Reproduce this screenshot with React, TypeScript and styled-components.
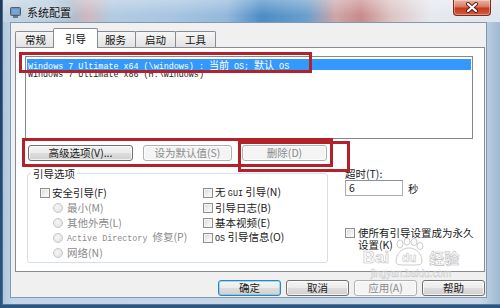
import styled, { createGlobalStyle } from "styled-components";

const CJK = `"Noto Sans CJK SC", "Liberation Sans", sans-serif`;
const MONO = `"Liberation Mono", "Noto Sans CJK SC", monospace`;

const GlobalStyle = createGlobalStyle`
  html, body { margin: 0; padding: 0; background: #1d3b5e; }
  body { font-family: ${CJK}; font-size: 10.5px; color: #1a1a1a; }
  * { box-sizing: border-box; }
`;

const Desktop = styled.div`
  position: relative;
  width: 500px;
  height: 308px;
  overflow: hidden;
  padding-left: 2px;
  background: linear-gradient(180deg, #1d3b5e 0%, #2b5682 100%);
`;

const Window = styled.div`
  width: 498px;
  height: 305px;
  display: flex;
  flex-direction: column;
  border-left: 1px solid #4f6a88;
  border-bottom: 1px solid #5d7896;
  background: linear-gradient(90deg, #aec6dd 0%, #c3d5e6 2%, #c9d7e5 96%, #9fbad4 100%);
`;

const TitleBar = styled.div`
  height: 22px;
  flex: none;
  display: flex;
  align-items: flex-start;
  padding: 0 9px 0 7px;
  background:
    linear-gradient(180deg, rgba(255, 255, 255, 0.3) 0%, rgba(255, 255, 255, 0) 70%),
    linear-gradient(90deg, #c6d5e4 0%, #b8cde0 9%, #a9bccf 13%, #cdb8c0 17%, #b3cbe2 22%,
      #a6c4e1 35%, #93b8dc 45%, #4d8dc6 52%, #6a9fcd 61%, #cfa6a8 67%, #c98b8b 72%,
      #dcc3c3 78%, #e6e9ee 86%, #dfe6ee 100%);
`;

const TitleIcon = styled.svg`
  margin-top: 7px;
  flex: none;
`;

const TitleText = styled.div`
  margin-left: 6px;
  margin-top: 1px;
  line-height: 22px;
  font-size: 11px;
  color: #111;
  text-shadow: 0 0 6px rgba(255, 255, 255, 0.95);
`;

const CloseButton = styled.div`
  margin-left: auto;
  width: 38px;
  height: 16px;
  display: flex;
  align-items: center;
  justify-content: center;
  border: 1px solid #7a2c22;
  border-top: none;
  border-radius: 0 0 4px 4px;
  background: linear-gradient(180deg, #eab2a4 0%, #da8069 42%, #c53a20 55%, #d65a3c 100%);
  box-shadow: inset 0 0 0 1px rgba(255, 255, 255, 0.35);
`;

const FrameBody = styled.div`
  display: flex;
  padding: 0 13px 0 7px;
`;

const Client = styled.div`
  width: 477px;
  height: 276px;
  display: flex;
  flex-direction: column;
  padding: 5px 1px 0 4px;
  border: 1px solid #8098b2;
  background: #f0f0f0;
`;

const TabStrip = styled.div`
  position: relative;
  z-index: 1;
  display: flex;
  align-items: flex-start;
  height: 20px;
  margin-bottom: -1px;
`;

const Tab = styled.div<{ $active?: boolean }>`
  position: relative;
  z-index: ${(p) => (p.$active ? 1 : 0)};
  width: ${(p) => (p.$active ? 45 : 41)}px;
  height: ${(p) => (p.$active ? 20 : 16)}px;
  margin-top: ${(p) => (p.$active ? 0 : 3)}px;
  margin-left: ${(p) => (p.$active ? -3 : -1)}px;
  margin-right: ${(p) => (p.$active ? -2 : 0)}px;
  display: flex;
  align-items: center;
  justify-content: center;
  border: 1px solid #898c95;
  border-bottom: none;
  border-radius: 2px 2px 0 0;
  background: ${(p) => (p.$active ? "#ffffff" : "linear-gradient(180deg, #f6f6f6 0%, #ececec 50%, #e2e2e2 100%)")};
  font-size: 10.5px;
  color: #111;

  &:first-child {
    margin-left: 0;
  }
`;

const Panel = styled.div`
  width: 470px;
  height: 225px;
  display: flex;
  flex-direction: column;
  align-items: flex-start;
  padding: 8px 0 0 9px;
  border: 1px solid #898c95;
  background: #ffffff;
`;

const ListBox = styled.div`
  width: 448px;
  height: 83px;
  padding: 2px 1px;
  border: 1px solid #828790;
  background: #ffffff;
`;

const ListRow = styled.div<{ $selected?: boolean }>`
  height: 11px;
  line-height: 11px;
  padding-left: 1px;
  white-space: nowrap;
  font-family: ${MONO};
  font-size: 8.4px;
  background: ${(p) => (p.$selected ? "#3399ff" : "transparent")};
  color: ${(p) => (p.$selected ? "#ffffff" : "#222222")};
`;

const RowCjk = styled.span`
  font-family: ${CJK};
  font-size: 10px;
`;

const Mono = styled.span`
  font-family: ${MONO};
  font-size: 8.4px;
`;

const ButtonRow = styled.div`
  display: flex;
  gap: 10px;
  margin-top: 6px;
  padding-left: 3px;
`;

const Button = styled.button<{ $w: number; $disabled?: boolean; $default?: boolean }>`
  width: ${(p) => p.$w}px;
  height: 16px;
  padding: 0;
  display: flex;
  align-items: center;
  justify-content: center;
  border: 1px solid ${(p) => (p.$disabled ? "#adb2b5" : p.$default ? "#3c7fb1" : "#707070")};
  border-radius: 3px;
  background: ${(p) =>
    p.$disabled
      ? "#f4f4f4"
      : "linear-gradient(180deg, #f4f4f4 0%, #ececec 48%, #dddddd 52%, #d0d0d0 100%)"};
  box-shadow: inset 0 0 0 1px ${(p) => (p.$default ? "rgba(72, 200, 251, 0.55)" : "rgba(255, 255, 255, 0.7)")};
  color: ${(p) => (p.$disabled ? "#8a8a8a" : "#1a1a1a")};
  font-family: ${CJK};
  font-size: 10.5px;
  line-height: 14px;
  white-space: nowrap;
`;

const LowerArea = styled.div`
  display: flex;
  align-items: flex-start;
  margin-top: 6px;
`;

const Group = styled.fieldset`
  width: 301px;
  margin: 0 0 0 2px;
  padding: 5px 0 2px 0;
  border: 1px solid #d5dfe5;
  border-radius: 3px;
`;

const Legend = styled.legend`
  margin-left: 3px;
  padding: 0 2px;
  font-size: 10.5px;
  line-height: 13px;
  color: #1a1a1a;
`;

const Columns = styled.div`
  display: flex;
  padding-left: 12px;
`;

const OptionColumn = styled.div<{ $w?: number }>`
  width: ${(p) => (p.$w ? `${p.$w}px` : "auto")};
  display: flex;
  flex-direction: column;
`;

const OptionRow = styled.div<{ $indent?: number; $disabled?: boolean }>`
  height: 15px;
  display: flex;
  align-items: center;
  padding-left: ${(p) => p.$indent ?? 0}px;
  white-space: nowrap;
  color: ${(p) => (p.$disabled ? "#8a8a8a" : "#1a1a1a")};
`;

const Label = styled.span`
  line-height: 15px;
`;

const CheckBox = styled.span<{ $top?: number }>`
  width: 10px;
  height: 10px;
  flex: none;
  margin: ${(p) => p.$top ?? 0}px 2px 0 0;
  border: 1px solid #8e8f8f;
  background: linear-gradient(135deg, #d6d6d6 0%, #f1f1f1 60%, #fdfdfd 100%);
  box-shadow: inset 0 0 0 1px #f4f4f4;
`;

const Radio = styled.span`
  width: 10px;
  height: 10px;
  flex: none;
  margin-right: 4px;
  border-radius: 50%;
  border: 1px solid #c6c6c6;
  background: radial-gradient(circle at 40% 40%, #f6f6f6 0%, #dedede 100%);
`;

const SidePane = styled.div`
  display: flex;
  flex-direction: column;
  margin-left: 17px;
`;

const TimeoutLabel = styled.div`
  line-height: 13px;
`;

const TimeoutRow = styled.div`
  display: flex;
  align-items: center;
  height: 16px;
`;

const TimeoutInput = styled.div`
  width: 58px;
  height: 16px;
  padding-left: 3px;
  border: 1px solid #abadb3;
  border-top-color: #8d9098;
  background: #ffffff;
  line-height: 14px;
`;

const Unit = styled.span`
  margin-left: 5px;
`;

const PermanentRow = styled.div`
  display: flex;
  align-items: flex-start;
  margin-top: 31px;
`;

const PermanentText = styled.div`
  width: 117px;
  margin-left: 1px;
  line-height: 12px;
`;

const DialogButtons = styled.div`
  display: flex;
  justify-content: flex-end;
  gap: 5px;
  margin-top: 8px;
`;

const Callout = styled.div<{ $x: number; $y: number; $w: number; $h: number }>`
  position: absolute;
  left: ${(p) => p.$x}px;
  top: ${(p) => p.$y}px;
  width: ${(p) => p.$w}px;
  height: ${(p) => p.$h}px;
  border: 3px solid #b3212b;
  pointer-events: none;
`;

const Watermark = styled.div`
  position: absolute;
  left: 352px;
  top: 238px;
  width: 118px;
  display: flex;
  flex-direction: column;
  align-items: center;
  pointer-events: none;
  opacity: 0.75;
`;

const WatermarkLogo = styled.div`
  display: flex;
  align-items: flex-end;
  gap: 3px;
`;

const WatermarkWord = styled.span<{ $size: number }>`
  font-family: "Liberation Sans", ${CJK};
  font-weight: bold;
  font-size: ${(p) => p.$size}px;
  line-height: 1;
  color: rgba(255, 255, 255, 0.85);
  -webkit-text-stroke: 0.6px #a9a9a9;
`;

const WatermarkUrl = styled.span`
  margin-top: 3px;
  font-family: "Liberation Sans", sans-serif;
  font-size: 10px;
  line-height: 10px;
  color: rgba(255, 255, 255, 0.8);
  -webkit-text-stroke: 0.4px #b5b5b5;
`;

const Paw = () => (
  <svg width="34" height="28" viewBox="0 0 34 28">
    <g fill="rgba(255,255,255,0.85)" stroke="#a9a9a9" strokeWidth="0.8">
      <ellipse cx="8" cy="6" rx="3" ry="4" />
      <ellipse cx="15" cy="3.5" rx="3" ry="3.5" />
      <ellipse cx="22" cy="4" rx="3" ry="3.5" />
      <ellipse cx="28" cy="8" rx="3" ry="3.5" />
      <path d="M4 24 C4 15 10 10 17 10 C24 10 30 15 30 24 C30 27 26 27 17 27 C8 27 4 27 4 24 Z" />
    </g>
    <text x="17" y="24" textAnchor="middle" fontFamily="Liberation Sans, sans-serif" fontWeight="bold"
      fontSize="12" fill="rgba(255,255,255,0.9)" stroke="#a9a9a9" strokeWidth="0.5">du</text>
  </svg>
);

export default function App() {
  return (
    <Desktop>
      <GlobalStyle />
      <Window>
        <TitleBar>
          <TitleIcon width="11" height="11" viewBox="0 0 11 11">
            <rect x="0.5" y="0.5" width="10" height="8" rx="1" fill="#7d8fa3" stroke="#4e5e70" />
            <rect x="2" y="2" width="7" height="5" fill="#6fa8dc" />
            <rect x="3" y="9" width="5" height="2" fill="#6a7b8e" />
          </TitleIcon>
          <TitleText>系统配置</TitleText>
          <CloseButton>
            <svg width="14" height="11" viewBox="0 0 14 11">
              <path d="M3 2 L11 9 M11 2 L3 9" stroke="#5a1a12" strokeWidth="4" strokeLinecap="round" />
              <path d="M3 2 L11 9 M11 2 L3 9" stroke="#ffffff" strokeWidth="2.2" strokeLinecap="round" />
            </svg>
          </CloseButton>
        </TitleBar>

        <FrameBody>
          <Client>
            <TabStrip>
              <Tab>常规</Tab>
              <Tab $active>引导</Tab>
              <Tab>服务</Tab>
              <Tab>启动</Tab>
              <Tab>工具</Tab>
            </TabStrip>

            <Panel>
              <ListBox>
                <ListRow $selected>
                  Windows 7 Ultimate x64 (\windows) : <RowCjk>当前</RowCjk> OS; <RowCjk>默认</RowCjk> OS
                </ListRow>
                <ListRow>Windows 7 Ultimate x86 (H:\windows)</ListRow>
              </ListBox>

              <ButtonRow>
                <Button $w={105}>高级选项(V)...</Button>
                <Button $w={89} $disabled>设为默认值(S)</Button>
                <Button $w={85} $disabled>删除(D)</Button>
              </ButtonRow>

              <LowerArea>
                <Group>
                  <Legend>引导选项</Legend>
                  <Columns>
                    <OptionColumn $w={163}>
                      <OptionRow>
                        <CheckBox />
                        <Label>安全引导(F)</Label>
                      </OptionRow>
                      <OptionRow $indent={13} $disabled>
                        <Radio />
                        <Label>最小(M)</Label>
                      </OptionRow>
                      <OptionRow $indent={13} $disabled>
                        <Radio />
                        <Label>其他外壳(L)</Label>
                      </OptionRow>
                      <OptionRow $indent={13} $disabled>
                        <Radio />
                        <Label>
                          <Mono>Active Directory </Mono>修复(P)
                        </Label>
                      </OptionRow>
                      <OptionRow $indent={13} $disabled>
                        <Radio />
                        <Label>网络(N)</Label>
                      </OptionRow>
                    </OptionColumn>
                    <OptionColumn>
                      <OptionRow>
                        <CheckBox />
                        <Label>
                          无 <Mono>GUI</Mono> 引导(N)
                        </Label>
                      </OptionRow>
                      <OptionRow>
                        <CheckBox />
                        <Label>引导日志(B)</Label>
                      </OptionRow>
                      <OptionRow>
                        <CheckBox />
                        <Label>基本视频(E)</Label>
                      </OptionRow>
                      <OptionRow>
                        <CheckBox />
                        <Label>
                          <Mono>OS</Mono> 引导信息(O)
                        </Label>
                      </OptionRow>
                    </OptionColumn>
                  </Columns>
                </Group>

                <SidePane>
                  <TimeoutLabel>超时(T):</TimeoutLabel>
                  <TimeoutRow>
                    <TimeoutInput>6</TimeoutInput>
                    <Unit>秒</Unit>
                  </TimeoutRow>
                  <PermanentRow>
                    <CheckBox $top={1} />
                    <PermanentText>使所有引导设置成为永久设置(K)</PermanentText>
                  </PermanentRow>
                </SidePane>
              </LowerArea>
            </Panel>

            <DialogButtons>
              <Button $w={63} $default>确定</Button>
              <Button $w={63}>取消</Button>
              <Button $w={63} $disabled>应用(A)</Button>
              <Button $w={63}>帮助</Button>
            </DialogButtons>
          </Client>
        </FrameBody>
      </Window>

      <Watermark>
        <WatermarkLogo>
          <WatermarkWord $size={17}>Bai</WatermarkWord>
          <Paw />
          <WatermarkWord $size={15}>经验</WatermarkWord>
        </WatermarkLogo>
        <WatermarkUrl>jingyan.baidu.com</WatermarkUrl>
      </Watermark>

      <Callout $x={19} $y={52} $w={293} $h={21} />
      <Callout $x={22} $y={138} $w={311} $h={29} />
      <Callout $x={238} $y={141} $w={112} $h={31} />
    </Desktop>
  );
}
